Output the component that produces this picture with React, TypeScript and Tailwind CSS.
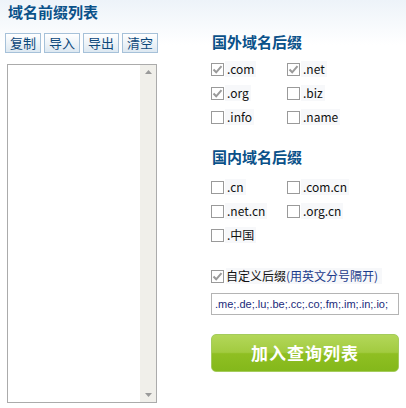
const FONT = { fontFamily: '"Liberation Sans", "Noto Sans CJK SC", sans-serif' }
const CJK = { fontFamily: '"Noto Sans CJK SC", "Liberation Sans", sans-serif' }

const FOREIGN = [
  { name: '.com', on: true },
  { name: '.net', on: true },
  { name: '.org', on: true },
  { name: '.biz', on: false },
  { name: '.info', on: false },
  { name: '.name', on: false },
]

const DOMESTIC = [
  { name: '.cn', on: false },
  { name: '.com.cn', on: false },
  { name: '.net.cn', on: false },
  { name: '.org.cn', on: false },
  { name: '.中国', on: false },
]

function Box({ on }: { on: boolean }) {
  return (
    <span className="w-[13px] h-[13px] border border-[#9a9a9a] bg-white flex items-center justify-center shrink-0">
      {on && (
        <svg width="11" height="11" viewBox="0 0 11 11">
          <path d="M1.5 5.5 L4.2 8.3 L9.5 2.2" fill="none" stroke="#9a9a9a" strokeWidth="2" />
        </svg>
      )}
    </span>
  )
}

function Check({ name, on }: { name: string; on: boolean }) {
  return (
    <label className="flex items-center h-[24px]">
      <Box on={on} />
      <span className="ml-[1px] bg-[#f7f8fa] px-[2px] h-[16px] leading-[16px] text-[12px] text-[#111]" style={CJK}>
        {name}
      </span>
    </label>
  )
}

function Heading({ children }: { children: string }) {
  return (
    <div className="text-[15px] font-bold leading-[20px] text-[#0a5189]" style={CJK}>
      {children}
    </div>
  )
}

export default function App() {
  return (
    <div className="w-[406px] h-[408px] flex bg-[linear-gradient(#edf3f9,#ffffff_45px)]" style={FONT}>
      <div className="w-[205px] pl-[5px] pt-[2px] flex flex-col">
        <div className="pl-[3px]"><Heading>域名前缀列表</Heading></div>
        <div className="flex gap-[3px] mt-[11px]">
          {['复制', '导入', '导出', '清空'].map(t => (
            <button
              key={t}
              type="button"
              className="w-[36px] h-[20px] border border-[#a6c1d9] bg-[linear-gradient(#ffffff,#dde8f1)] text-[13px] leading-[18px] text-[#0c477a]"
              style={CJK}
            >
              {t}
            </button>
          ))}
        </div>
        <div className="ml-[2px] mt-[11px] w-[150px] h-[339px] border border-[#ababab] bg-white flex justify-end">
          <div className="w-[16px] h-full bg-[#f0efea] flex flex-col items-center justify-between py-[5px]">
            <svg width="7" height="4" viewBox="0 0 7 4"><path d="M0 4 L3.5 0 L7 4 Z" fill="#9a9a9a" /></svg>
            <svg width="7" height="4" viewBox="0 0 7 4"><path d="M0 0 L3.5 4 L7 0 Z" fill="#9a9a9a" /></svg>
          </div>
        </div>
      </div>

      <div className="w-[190px] pl-[6px] pt-[32px] flex flex-col">
        <div className="pl-[1px]"><Heading>国外域名后缀</Heading></div>
        <div className="grid grid-cols-[76px_1fr] mt-[5px]">
          {FOREIGN.map(d => <Check key={d.name} {...d} />)}
        </div>
        <div className="pl-[1px] mt-[18px]"><Heading>国内域名后缀</Heading></div>
        <div className="grid grid-cols-[76px_1fr] mt-[8px]">
          {DOMESTIC.map(d => <Check key={d.name} {...d} />)}
        </div>
        <div className="mt-[19px]">
          <label className="flex items-center h-[20px]">
            <Box on />
            <span className="ml-[2px] bg-[#f7f8fa] pr-[4px] text-[12px] leading-[16px] text-[#111]" style={CJK}>
              自定义后缀<span className="text-[#1a3a8a]">(用英文分号隔开)</span>
            </span>
          </label>
        </div>
        <div className="mt-[7px] w-[188px] h-[22px] border border-[#b4b4b4] bg-white overflow-hidden whitespace-nowrap pl-[3px] text-[11px] leading-[20px] text-[#1a2a7a]">
          .me;.de;.lu;.be;.cc;.co;.fm;.im;.in;.io;
        </div>
        <button
          type="button"
          className="mt-[19px] w-[188px] h-[38px] rounded-[5px] border border-[#a4cc5c] bg-[linear-gradient(#b3d759,#a2cb40_48%,#8fbf22_52%,#84b81b)] text-white text-[17px] font-bold tracking-[1px]"
          style={CJK}
        >
          加入查询列表
        </button>
      </div>
    </div>
  )
}
